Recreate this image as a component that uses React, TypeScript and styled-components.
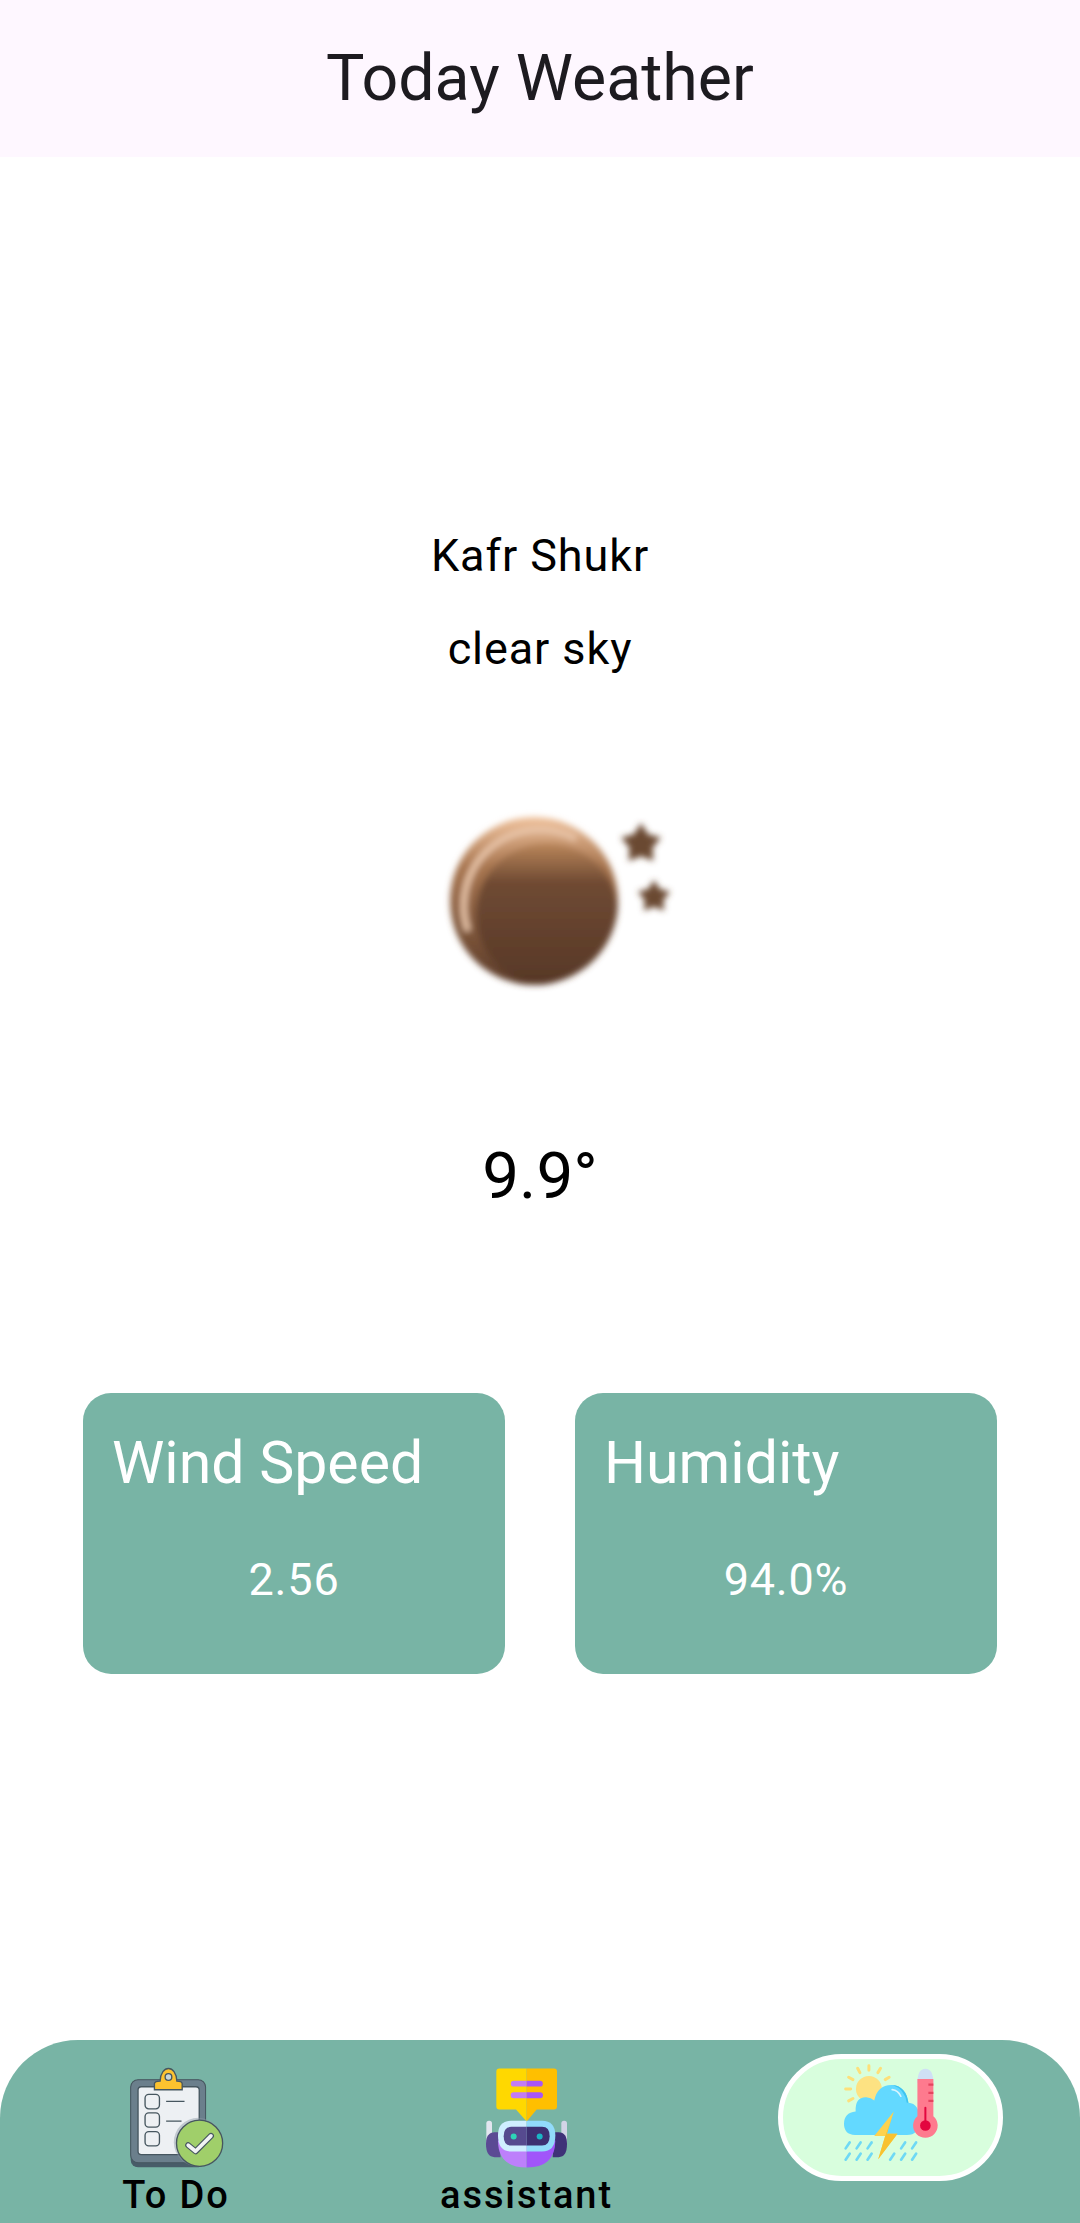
import React from "react";
import styled, { createGlobalStyle } from "styled-components";

const GREEN = "#78b4a5";

const Global = createGlobalStyle`
  html, body { margin: 0; padding: 0; background: #fff; }
  body { font-family: Roboto, "Liberation Sans", sans-serif; }
`;

const Page = styled.div`
  width: 1080px;
  height: 2223px;
  display: flex;
  flex-direction: column;
  overflow: hidden;
  background: #fff;
`;

const Header = styled.header`
  height: 157px;
  box-sizing: border-box;
  padding-bottom: 2px;
  flex: none;
  background: #fef7ff;
  color: #1d1b20;
  font-size: 64.5px;
  display: flex;
  align-items: center;
  justify-content: center;
`;

const Main = styled.main`
  flex: 1;
  display: flex;
  flex-direction: column;
  align-items: center;
  padding-top: 372px;
`;

const Line = styled.div`
  font-size: 45px;
  line-height: 53px;
  letter-spacing: 0.9px;
  color: #000;
  margin-bottom: 40px;
`;

const Temp = styled.div`
  font-size: 65.5px;
  line-height: 79px;
  color: #000;
  margin-top: 115px;
`;

const MoonIcon = styled.svg`
  width: 320px;
  height: 240px;
  margin: 66px 0 0 40px;
  display: block;
`;

const Cards = styled.div`
  margin-top: 178px;
  width: 914px;
  display: grid;
  grid-template-columns: 422px 422px;
  justify-content: space-between;
`;

const Card = styled.div`
  height: 281px;
  border-radius: 28px;
  background: ${GREEN};
  color: #fff;
  padding: 37px 29px 0;
  box-sizing: border-box;
`;

const CardTitle = styled.div`
  font-size: 59px;
  line-height: 66px;
`;

const CardValue = styled.div`
  font-size: 45px;
  line-height: 53px;
  letter-spacing: 0.8px;
  text-align: center;
  margin-top: 57px;
`;

const Nav = styled.nav`
  flex: none;
  height: 183px;
  background: ${GREEN};
  border-radius: 78px 78px 0 0;
  display: grid;
  grid-template-columns: 352px 349px 379px;
`;

const NavItem = styled.div`
  display: flex;
  flex-direction: column;
  align-items: center;
  padding-top: ${(p: { $top: number }) => p.$top}px;
`;

const NavLabel = styled.div`
  font-size: 38px;
  font-weight: 500;
  letter-spacing: 1.9px;
  line-height: 44px;
  color: #000;
  margin-top: 4px;
`;

const Pill = styled.div`
  width: 225px;
  height: 127px;
  box-sizing: border-box;
  border: 5px solid #fff;
  border-radius: 64px;
  background: #d8fedd;
  display: flex;
  justify-content: center;
  padding-top: 4px;
`;

const Star = ({ cx, cy, r, fill }: { cx: number; cy: number; r: number; fill: string }) => {
  const pts = Array.from({ length: 10 }, (_, i) => {
    const a = (-90 + i * 36) * (Math.PI / 180);
    const rr = i % 2 ? r * 0.58 : r;
    return `${cx + rr * Math.cos(a)},${cy + rr * Math.sin(a)}`;
  }).join(" ");
  return <polygon points={pts} fill={fill} />;
};

function Moon() {
  return (
    <MoonIcon viewBox="0 0 320 240">
      <defs>
        <linearGradient id="moonBase" x1="0" y1="0" x2="0" y2="1">
          <stop offset="0" stopColor="#f0c29c" />
          <stop offset="0.3" stopColor="#a87650" />
          <stop offset="1" stopColor="#5a3a28" />
        </linearGradient>
        <linearGradient id="moonFace" x1="0" y1="0" x2="0" y2="1">
          <stop offset="0" stopColor="#bb875b" />
          <stop offset="0.28" stopColor="#6f4a33" />
          <stop offset="1" stopColor="#573827" />
        </linearGradient>
        <filter id="soft" x="-10%" y="-10%" width="120%" height="120%">
          <feGaussianBlur stdDeviation="3" />
        </filter>
        <clipPath id="moonClip">
          <circle cx="134" cy="120" r="84" />
        </clipPath>
      </defs>
      <g filter="url(#soft)">
        <circle cx="134" cy="120" r="84" fill="url(#moonBase)" />
        <g clipPath="url(#moonClip)">
          <path d="M68 150 A76 76 0 0 1 176 58" fill="none" stroke="#e8c4a8" strokeWidth="6" />
          <circle cx="147" cy="133" r="71" fill="url(#moonFace)" />
        </g>
        <Star cx={241} cy={63} r={21} fill="#6b4832" />
        <Star cx={254} cy={116} r={17} fill="#6b4832" />
      </g>
    </MoonIcon>
  );
}

function TodoIcon() {
  return (
    <svg width="97" height="102" viewBox="140 80 290 305">
      <rect x="148" y="118" width="224" height="262" rx="22" fill="#485c68" />
      <rect x="148" y="118" width="224" height="248" rx="22" fill="#6b7f8c" stroke="#46565f" strokeWidth="3" />
      <rect x="170" y="139" width="183" height="203" rx="10" fill="#edf0f3" stroke="#46565f" strokeWidth="4" />
      <path d="M219 148 V130 Q219 122 236 122 C238 72 284 72 286 122 Q302 122 302 130 V148 Z" fill="#fcc22f" stroke="#46565f" strokeWidth="4" />
      <circle cx="261" cy="110" r="10" fill="#c9d6d8" stroke="#46565f" strokeWidth="4" />
      {[162, 217, 273].map((y) => (
        <rect key={y} x="191" y={y} width="43" height="43" rx="11" fill="#edf0f3" stroke="#46565f" strokeWidth="4" />
      ))}
      <path d="M254 183 H309 M254 242 H300" stroke="#46565f" strokeWidth="4" />
      <circle cx="350" cy="305" r="73" fill="#8b9aa5" opacity="0.45" />
      <circle cx="354" cy="308" r="69" fill="#a0cf6a" stroke="#46565f" strokeWidth="4" />
      <path d="M320 314 L342 332 L388 286" fill="none" stroke="#46565f" strokeWidth="18" strokeLinecap="round" strokeLinejoin="round" />
      <path d="M320 314 L342 332 L388 286" fill="none" stroke="#f2f4f4" strokeWidth="11" strokeLinecap="round" strokeLinejoin="round" />
    </svg>
  );
}

function RobotIcon() {
  return (
    <svg width="85" height="102" viewBox="190 80 255 305">
      <path d="M318 84 H236 Q227 84 227 93 V198 Q227 207 236 207 H286 L318 243 Z" fill="#ffd800" />
      <path d="M318 84 H400 Q409 84 409 93 V198 Q409 207 400 207 H348 L318 243 Z" fill="#ffbf00" />
      <path d="M279 121 H318 V138 H279 A8.5 8.5 0 0 1 279 121 Z M279 155 H318 V173 H279 A9 9 0 0 1 279 155 Z" fill="#c27cf5" />
      <path d="M318 121 H358 A8.500 8.500 0 0 1 358 138 H318 Z M318 155 H358 A9 9 0 0 1 358 173 H318 Z" fill="#a855f7" />
      <rect x="197" y="241" width="17" height="70" rx="8" fill="#e3e6f0" />
      <rect x="422" y="241" width="17" height="70" rx="8" fill="#d2d4e6" />
      <path d="M235 275 H222 Q196 275 196 310 Q196 350 222 350 H240 Z" fill="#5b4a94" />
      <path d="M400 275 H414 Q439 275 439 310 Q439 350 414 350 H396 Z" fill="#3f3178" />
      <path d="M232 300 Q232 381 318 381 V300 Z" fill="#bd80fb" />
      <path d="M404 300 Q404 381 318 381 V300 Z" fill="#a155fa" />
      <path d="M318 241 H272 Q232 241 232 285 Q232 333 272 333 H318 Z" fill="#cfeeff" />
      <path d="M318 241 H364 Q404 241 404 285 Q404 333 364 333 H318 Z" fill="#92dbfb" />
      <path d="M318 259 H272 Q249 259 249 287 Q249 315 272 315 H318 Z" fill="#564a8f" />
      <path d="M318 259 H364 Q387 259 387 287 Q387 315 364 315 H318 Z" fill="#3d3072" />
      <circle cx="279" cy="288" r="9" fill="#2ed3b7" />
      <circle cx="357" cy="288" r="9" fill="#1ab5c4" />
    </svg>
  );
}

function WeatherIcon() {
  const drops = [
    [262, 318], [295, 318], [328, 318], [429, 318], [462, 318],
    [262, 352], [295, 352], [328, 352], [396, 352], [429, 352], [462, 352],
  ];
  return (
    <svg width="98" height="98" viewBox="245 70 295 295">
      <g stroke="#fde07a" strokeWidth="9" strokeLinecap="round">
        <path d="M326 78 V92 M292 86 L299 99 M361 86 L353 99 M265 113 L278 120 M387 113 L375 120 M256 148 H271 M265 184 L278 177" />
      </g>
      <circle cx="326" cy="148" r="39" fill="#fde282" />
      <path d="M284 287 Q251 285 251 253 Q251 220 286 216 Q284 172 318 173 Q333 174 342 183 Q352 134 397 136 Q438 140 445 190 Q478 192 478 240 Q478 287 440 287 Z" fill="#63d9ff" />
      <path d="M397 136 Q438 140 445 190 L440 190 Q434 148 397 136 Z" fill="#3fc3f0" />
      <path d="M396 150 Q414 152 422 170" stroke="#d7f4ff" strokeWidth="5" fill="none" strokeLinecap="round" />
      <path d="M401 216 L342 290 L375 290 L354 360 L412 283 L380 283 Z" fill="#fdd24e" />
      <path d="M401 216 L380 283 L412 283 L354 360 L375 290 L390 250 Z" fill="#f8c22f" />
      <path d="M472 130 Q472 87 496 87 Q520 87 520 130 Z" fill="#cfe0f5" />
      <path d="M472 118 H520 V230 A37 37 0 1 1 472 230 Z" fill="#fe7a8e" />
      <path d="M505 135 H520 M505 160 H520 M505 184 H520" stroke="#e5445f" strokeWidth="7" />
      <path d="M496 205 V250" stroke="#e3063f" strokeWidth="6" strokeLinecap="round" />
      <circle cx="496" cy="258" r="16" fill="#e3063f" />
      {drops.map(([x, y]) => (
        <path key={`${x}-${y}`} d={`M${x + 6} ${y - 9} L${x - 6} ${y + 9}`} stroke="#6fd9f5" strokeWidth="8" strokeLinecap="round" />
      ))}
    </svg>
  );
}

export default function App() {
  return (
    <Page>
      <Global />
      <Header>Today Weather</Header>
      <Main>
        <Line>Kafr Shukr</Line>
        <Line>clear sky</Line>
        <Moon />
        <Temp>9.9°</Temp>
        <Cards>
          <Card>
            <CardTitle>Wind Speed</CardTitle>
            <CardValue>2.56</CardValue>
          </Card>
          <Card>
            <CardTitle>Humidity</CardTitle>
            <CardValue>94.0%</CardValue>
          </Card>
        </Cards>
      </Main>
      <Nav>
        <NavItem $top={27}>
          <TodoIcon />
          <NavLabel>To Do</NavLabel>
        </NavItem>
        <NavItem $top={27}>
          <RobotIcon />
          <NavLabel>assistant</NavLabel>
        </NavItem>
        <NavItem $top={14}>
          <Pill>
            <WeatherIcon />
          </Pill>
        </NavItem>
      </Nav>
    </Page>
  );
}
